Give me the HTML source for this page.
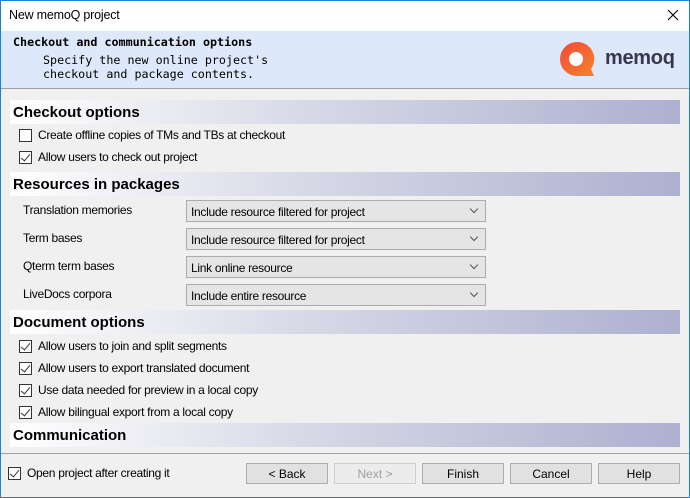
<!DOCTYPE html>
<html><head><meta charset="utf-8"><style>
*{margin:0;padding:0;box-sizing:border-box}
body{width:690px;height:498px;overflow:hidden;background:#f0f0f0;font-family:"Liberation Sans",sans-serif;font-size:12px;color:#000;position:relative}
.abs{position:absolute}
.win{position:absolute;left:0;top:0;width:690px;height:498px;border:1px solid #1883d7;pointer-events:none}
.bar{position:absolute;left:10px;width:670px;height:24px;background:linear-gradient(to right,#ffffff 0%,#d6d8e6 45%,#adb0d0 100%);font-weight:bold;font-size:15px;padding:4px 0 0 3px}
.cb{position:absolute;width:13px;height:13px;border:1px solid #333;background:#fff}
.cb.c::after{content:"";position:absolute;left:3px;top:0px;width:4px;height:8px;border:solid #333;border-width:0 1.3px 1.3px 0;transform:rotate(40deg)}
.lbl{position:absolute;font-size:12px;letter-spacing:-0.3px}
.combo{position:absolute;left:186px;width:300px;height:22px;background:#e5e5e5;border:1px solid #acacac;padding:4px 0 0 4px;font-size:12px;letter-spacing:-0.3px}
.combo::after{content:"";position:absolute;right:8px;top:5px;width:5px;height:5px;border:solid #555;border-width:0 1px 1px 0;transform:rotate(45deg)}
.btn{position:absolute;top:463px;width:82px;height:21px;background:#e1e1e1;border:1px solid #adadad;text-align:center;padding-top:3px;font-size:12px}
</style></head><body>
<div class="abs" style="left:0;top:0;width:690px;height:31px;background:#fff"></div>
<div class="abs" style="left:9px;top:8px;font-size:12.5px;letter-spacing:-0.2px">New memoQ project</div>
<svg class="abs" style="left:667px;top:9px" width="12" height="12"><path d="M1 1L11 11M11 1L1 11" stroke="#000" stroke-width="1.1"/></svg>
<div class="abs" style="left:0;top:31px;width:690px;height:58px;background:#dde8fb;border-bottom:1px solid #a0a0a0"></div>
<div class="abs" style="left:13px;top:35px;font-family:'DejaVu Sans Mono','Liberation Mono',monospace;font-weight:bold;font-size:11.7px">Checkout and communication options</div>
<div class="abs" style="left:43px;top:53px;font-family:'DejaVu Sans Mono','Liberation Mono',monospace;font-size:11.7px;line-height:14px">Specify the new online project's<br>checkout and package contents.</div>
<svg class="abs" style="left:558px;top:41px" width="38" height="38" viewBox="0 0 38 38"><defs><linearGradient id="g" x1="0" y1="0" x2="1" y2="1"><stop offset="0" stop-color="#f04a3a"/><stop offset="1" stop-color="#f7822a"/></linearGradient></defs><path d="M19 1A17 17 0 1 0 19 35L36 35L33 28A17 17 0 0 0 19 1Z" fill="url(#g)"/><circle cx="18" cy="18" r="7" fill="#fff"/></svg>
<div class="abs" style="left:605px;top:47px;font-size:20px;font-weight:bold;color:#3b3650;letter-spacing:-0.3px">memoq</div>

<div class="bar" style="top:100px">Checkout options</div>
<div class="cb" style="left:19px;top:129px"></div><div class="lbl" style="left:38px;top:128px">Create offline copies of TMs and TBs at checkout</div>
<div class="cb c" style="left:19px;top:151px"></div><div class="lbl" style="left:38px;top:150px">Allow users to check out project</div>

<div class="bar" style="top:172px">Resources in packages</div>
<div class="lbl" style="left:23px;top:203px">Translation memories</div><div class="combo" style="top:200px">Include resource filtered for project</div>
<div class="lbl" style="left:23px;top:231px">Term bases</div><div class="combo" style="top:228px">Include resource filtered for project</div>
<div class="lbl" style="left:23px;top:259px">Qterm term bases</div><div class="combo" style="top:256px">Link online resource</div>
<div class="lbl" style="left:23px;top:287px">LiveDocs corpora</div><div class="combo" style="top:284px">Include entire resource</div>

<div class="bar" style="top:310px">Document options</div>
<div class="cb c" style="left:19px;top:340px"></div><div class="lbl" style="left:38px;top:339px">Allow users to join and split segments</div>
<div class="cb c" style="left:19px;top:362px"></div><div class="lbl" style="left:38px;top:361px">Allow users to export translated document</div>
<div class="cb c" style="left:19px;top:384px"></div><div class="lbl" style="left:38px;top:383px">Use data needed for preview in a local copy</div>
<div class="cb c" style="left:19px;top:406px"></div><div class="lbl" style="left:38px;top:405px">Allow bilingual export from a local copy</div>

<div class="bar" style="top:423px">Communication</div>
<div class="abs" style="left:1px;top:453px;width:688px;height:1px;background:#a0a0a0"></div>
<div class="cb c" style="left:8px;top:467px"></div><div class="lbl" style="left:27px;top:466px">Open project after creating it</div>
<div class="btn" style="left:246px">&lt; Back</div>
<div class="btn" style="left:334px;background:#ececec;border-color:#cfcfcf;color:#a0a0a0">Next &gt;</div>
<div class="btn" style="left:422px">Finish</div>
<div class="btn" style="left:510px">Cancel</div>
<div class="btn" style="left:598px">Help</div>
<div class="win"></div>
</body></html>
